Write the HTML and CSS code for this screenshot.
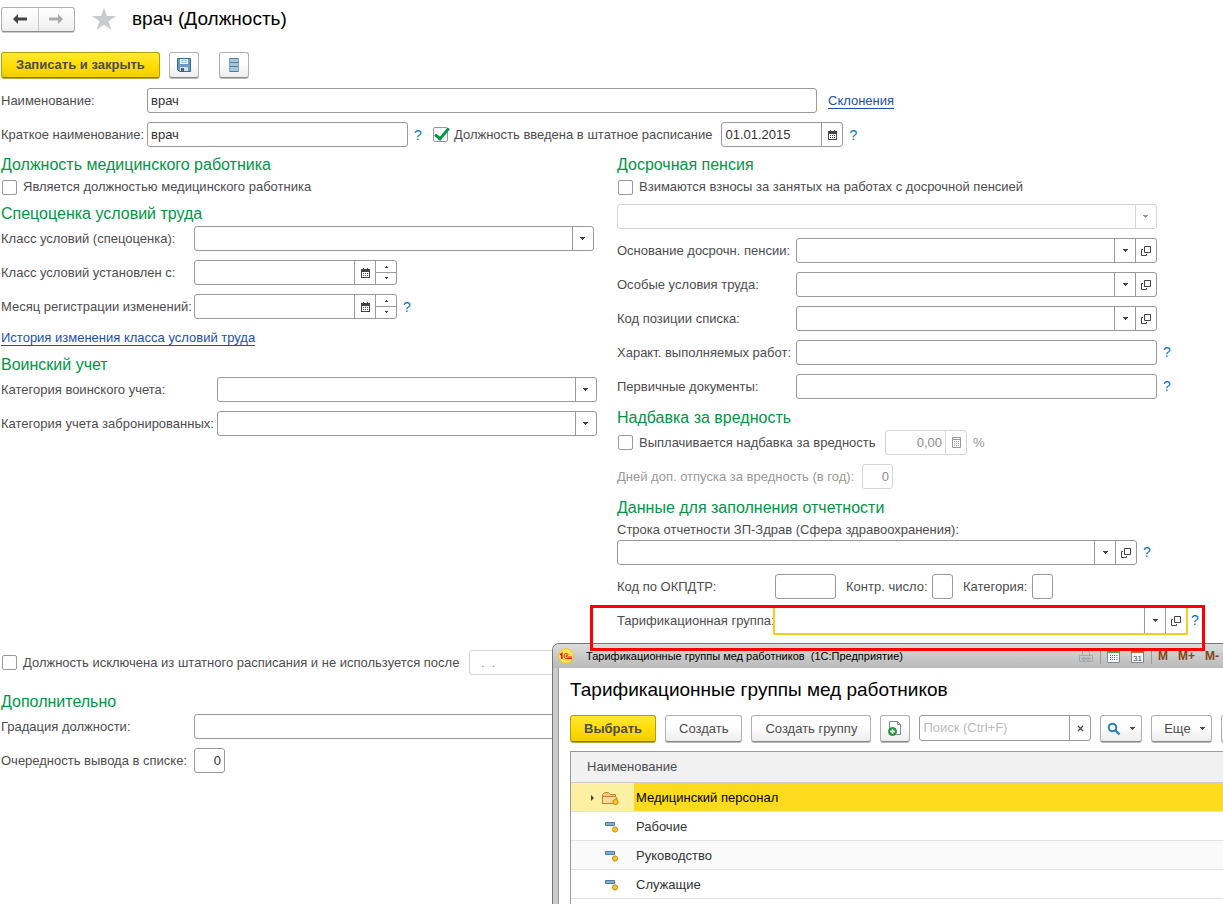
FILE: index.html
```html
<!DOCTYPE html>
<html lang="ru">
<head>
<meta charset="utf-8">
<title>врач (Должность)</title>
<link rel="stylesheet" href="styles.css">
</head>
<body>
<svg class="sprite" aria-hidden="true">
  <symbol id="i-down" viewBox="0 0 7 4"><path d="M1 0h5v1h-1v1h-1v1h-1v-1h-1v-1h-1z" fill="currentColor"/></symbol>
  <symbol id="i-up" viewBox="0 0 5 3"><path d="M1 3V2h1V1h1v1h1v1z" fill="currentColor"/></symbol>
  <symbol id="i-dn" viewBox="0 0 5 3"><path d="M1 0h3v1h-1v1h-1v-1h-1z" fill="currentColor"/></symbol>
  <symbol id="i-open" viewBox="0 0 10 10"><path d="M3.500 .5h6v6h-6zM2 3.500H.5v6h5V8" fill="none" stroke="currentColor"/></symbol>
  <symbol id="i-cal" viewBox="0 0 9 10"><path d="M0 1h2V0h1v1h3V0h1v1h2v9H0zM1 4v5h7V4z" fill="currentColor" fill-rule="evenodd"/><path d="M2 5h1v1H2zM4 5h1v1H4zM6 5h1v1H6zM2 7h1v1H2zM4 7h1v1H4zM6 7h1v1H6z" fill="currentColor"/></symbol>
  <symbol id="i-calc" viewBox="0 0 9 11"><path d="M.5.5h8v10h-8zM1 2.500h7" fill="none" stroke="currentColor"/><path d="M2 4h1v1H2zM4 4h1v1H4zM6 4h1v1H6zM2 6h1v1H2zM4 6h1v1H4zM6 6h1v1H6zM2 8h1v1H2zM4 8h1v1H4zM6 8h1v1H6z" fill="currentColor"/></symbol>
  <symbol id="i-item" viewBox="0 0 14 12"><path d="M.5 1.500h9v3h-9z" fill="#7fb0d3" stroke="#4f7c9b"/><circle cx="10" cy="8.500" r="2.600" fill="#f6c62c" stroke="#c08f17"/></symbol>
</svg>

<main class="page">
  <header class="head">
    <div class="nav">
      <button type="button" aria-label="Назад"><svg width="14" height="10" viewBox="0 0 14 10"><path d="M0 5 5 0v3.500h9v3H5V10z" fill="#444"/></svg></button>
      <button type="button" aria-label="Вперед"><svg width="14" height="10" viewBox="0 0 14 10"><path d="M14 5 9 0v3.500H0v3h9V10z" fill="#aaa"/></svg></button>
    </div>
    <svg class="star" width="24" height="22" viewBox="0 0 24 22"><path d="M12 0 14.900 8H24l-7.300 5.200L19.400 22 12 16.700 4.600 22l2.700-8.800L0 8h9.100z" fill="#c9cbcd"/></svg>
    <h1>врач (Должность)</h1>
  </header>

  <div class="toolbar">
    <button type="button" class="btn primary">Записать и закрыть</button>
    <button type="button" class="btn icon" aria-label="Записать"><svg width="14" height="14" viewBox="0 0 14 14"><path d="M.5.500h13v13h-11l-2-2z" fill="#6b9bc4" stroke="#3b6a95"/><path d="M3 1h8v5H3z" fill="#fff"/><path d="M4 2.500h6M4 4.500h6" stroke="#9db9d0"/><path d="M3 9h8v4H3z" fill="#d5dde4"/><path d="M4 10h3v3H4z" fill="#4d5f70"/></svg></button>
    <button type="button" class="btn icon gap" aria-label="Список"><svg width="10" height="14" viewBox="0 0 10 14"><path d="M0 0h10v14H0z" fill="#a4c5dc"/><path d="M0 .5h10M0 4.500h10M0 8.500h10M0 13.500h10" stroke="#527e9d"/><path d="M.5 0v14M9.500 0v14" stroke="#7fa5c0"/></svg></button>
  </div>

  <div class="row">
    <label class="w146" for="name">Наименование:</label>
    <input class="box w670" id="name" type="text" value="врач">
    <a class="link after" href="#decl">Склонения</a>
  </div>
  <div class="row short">
    <label class="w146" for="sname">Краткое наименование:</label>
    <input class="box w261" id="sname" type="text" value="врач">
    <button type="button" class="help">?</button>
    <label class="check in-list"><input type="checkbox" checked>Должность введена в штатное расписание</label>
    <span class="box combo w122"><input type="text" value="01.01.2015" aria-label="Дата ввода"><button type="button" aria-label="Календарь"><svg width="9" height="10"><use href="#i-cal"/></svg></button></span>
    <button type="button" class="help">?</button>
  </div>

  <div class="columns">
    <section>
      <h2>Должность медицинского работника</h2>
      <label class="check line"><input type="checkbox">Является должностью медицинского работника</label>
      <h2>Спецоценка условий труда</h2>
      <div class="row">
        <label class="w193" for="cls">Класс условий (спецоценка):</label>
        <span class="box combo grow"><select id="cls"><option></option></select><svg class="mark" width="7" height="4"><use href="#i-down"/></svg></span>
        <span class="tail23"></span>
      </div>
      <div class="row">
        <label class="w193" for="clsd">Класс условий установлен с:</label>
        <span class="box combo w203"><input id="clsd" type="text"><button type="button" aria-label="Календарь"><svg width="9" height="10"><use href="#i-cal"/></svg></button><span class="spin"><button type="button" aria-label="Больше"><svg width="5" height="3"><use href="#i-up"/></svg></button><button type="button" aria-label="Меньше"><svg width="5" height="3"><use href="#i-dn"/></svg></button></span></span>
      </div>
      <div class="row">
        <label class="w193" for="mon">Месяц регистрации изменений:</label>
        <span class="box combo w203"><input id="mon" type="text"><button type="button" aria-label="Календарь"><svg width="9" height="10"><use href="#i-cal"/></svg></button><span class="spin"><button type="button" aria-label="Больше"><svg width="5" height="3"><use href="#i-up"/></svg></button><button type="button" aria-label="Меньше"><svg width="5" height="3"><use href="#i-dn"/></svg></button></span></span>
        <button type="button" class="help">?</button>
      </div>
      <div class="line"><a class="link" href="#history">История изменения класса условий труда</a></div>
      <h2>Воинский учет</h2>
      <div class="row">
        <label class="w216" for="mil">Категория воинского учета:</label>
        <span class="box combo grow"><select id="mil"><option></option></select><svg class="mark" width="7" height="4"><use href="#i-down"/></svg></span>
        <span class="tail20"></span>
      </div>
      <div class="row">
        <label class="w216" for="res">Категория учета забронированных:</label>
        <span class="box combo grow"><select id="res"><option></option></select><svg class="mark" width="7" height="4"><use href="#i-down"/></svg></span>
        <span class="tail20"></span>
      </div>
    </section>

    <section>
      <h2>Досрочная пенсия</h2>
      <label class="check line"><input type="checkbox">Взимаются взносы за занятых на работах с досрочной пенсией</label>
      <div class="row">
        <span class="box combo grow off"><select disabled aria-label="Вид взносов"><option></option></select><svg class="mark" width="7" height="4"><use href="#i-down"/></svg></span>
        <span class="tail66"></span>
      </div>
      <div class="row">
        <label class="w179" for="base">Основание досрочн. пенсии:</label>
        <span class="box combo grow"><input id="base" type="text"><button type="button" aria-label="Выбрать"><svg width="7" height="4"><use href="#i-down"/></svg></button><button type="button" aria-label="Открыть"><svg width="10" height="10"><use href="#i-open"/></svg></button></span>
        <span class="tail66"></span>
      </div>
      <div class="row">
        <label class="w179" for="spec">Особые условия труда:</label>
        <span class="box combo grow"><input id="spec" type="text"><button type="button" aria-label="Выбрать"><svg width="7" height="4"><use href="#i-down"/></svg></button><button type="button" aria-label="Открыть"><svg width="10" height="10"><use href="#i-open"/></svg></button></span>
        <span class="tail66"></span>
      </div>
      <div class="row">
        <label class="w179" for="pos">Код позиции списка:</label>
        <span class="box combo grow"><input id="pos" type="text"><button type="button" aria-label="Выбрать"><svg width="7" height="4"><use href="#i-down"/></svg></button><button type="button" aria-label="Открыть"><svg width="10" height="10"><use href="#i-open"/></svg></button></span>
        <span class="tail66"></span>
      </div>
      <div class="row">
        <label class="w179" for="works">Характ. выполняемых работ:</label>
        <input class="box grow" id="works" type="text">
        <span class="tail66"><button type="button" class="help">?</button></span>
      </div>
      <div class="row">
        <label class="w179" for="docs">Первичные документы:</label>
        <input class="box grow" id="docs" type="text">
        <span class="tail66"><button type="button" class="help">?</button></span>
      </div>
      <h2>Надбавка за вредность</h2>
      <div class="row">
        <label class="check w268"><input type="checkbox">Выплачивается надбавка за вредность</label>
        <span class="box combo off w82"><input class="num" type="text" value="0,00" disabled aria-label="Процент надбавки"><button type="button" disabled aria-label="Калькулятор"><svg width="9" height="11"><use href="#i-calc"/></svg></button></span>
        <span class="pct">%</span>
      </div>
      <div class="row">
        <label class="muted w245" for="days">Дней доп. отпуска за вредность (в год):</label>
        <input class="box off num w31" id="days" type="text" value="0" disabled>
      </div>
      <h2>Данные для заполнения отчетности</h2>
      <label class="over" for="zp">Строка отчетности ЗП-Здрав (Сфера здравоохранения):</label>
      <div class="row">
        <span class="box combo grow"><input id="zp" type="text"><button type="button" aria-label="Выбрать"><svg width="7" height="4"><use href="#i-down"/></svg></button><button type="button" aria-label="Открыть"><svg width="10" height="10"><use href="#i-open"/></svg></button></span>
        <span class="tail86"><button type="button" class="help">?</button></span>
      </div>
      <div class="row">
        <label class="w158" for="okp">Код по ОКПДТР:</label>
        <input class="box w61" id="okp" type="text">
        <label class="mid w96" for="ctl">Контр. число:</label>
        <input class="box w21" id="ctl" type="text">
        <label class="mid w79" for="cat">Категория:</label>
        <input class="box w21" id="cat" type="text">
      </div>
      <div class="row">
        <label class="w158" for="tar">Тарификационная группа:</label>
        <span class="box combo grow active"><input id="tar" type="text"><button type="button" aria-label="Выбрать"><svg width="7" height="4"><use href="#i-down"/></svg></button><button type="button" aria-label="Открыть"><svg width="10" height="10"><use href="#i-open"/></svg></button></span>
        <span class="tail35"><button type="button" class="help">?</button></span>
      </div>
    </section>
  </div>

  <div class="row excl">
    <label class="check w468"><input type="checkbox">Должность исключена из штатного расписания и не используется после</label>
    <input class="box off w122 date" type="text" value=".  ." disabled aria-label="Дата исключения">
  </div>
  <h2>Дополнительно</h2>
  <div class="row">
    <label class="w193" for="grad">Градация должности:</label>
    <input class="box w400" id="grad" type="text">
  </div>
  <div class="row">
    <label class="w193" for="ord">Очередность вывода в списке:</label>
    <input class="box num w31" id="ord" type="text" value="0">
  </div>

  <aside class="window">
    <div class="titlebar">
      <svg width="16" height="16" viewBox="0 0 16 16"><circle cx="8" cy="8" r="7.500" fill="#ffe650" stroke="#e8bf48"/><path d="M2 6.800 3.800 5.500V11" fill="none" stroke="#d9161c" stroke-width="1.500"/><path d="M10.500 6.700C9.600 5.200 6 5.200 6 8c0 1.800 1.200 2.500 2.500 2.500H14M9.800 7.500C9 6.900 7.800 7.200 7.800 8s.6 1 1.300 1H14" fill="none" stroke="#d9161c" stroke-width="1"/></svg>
      <span class="caption">Тарификационные группы мед работников&nbsp; (1С:Предприятие)</span>
      <div class="tools">
        <button type="button" aria-label="Печать"><svg width="16" height="14" viewBox="0 0 16 14"><path d="M4.500 6V1.500h5l2 2V6M1.500 6.500h13v6h-13zM3 9.500h10" fill="none" stroke="#a4a8ac"/><circle cx="6" cy="10" r="1.500" fill="none" stroke="#a4a8ac"/><circle cx="10" cy="10" r="1.500" fill="none" stroke="#a4a8ac"/></svg></button>
        <i class="sep"></i>
        <button type="button" aria-label="Калькулятор"><svg width="14" height="13" viewBox="0 0 14 13"><path d="M.5.500h12v12H.5z" fill="#f4f8f8" stroke="#7b8f93"/><path d="M0 0h13v3H0z" fill="#3fa64a"/><path d="M3.500 5v6M5.500 5v6M7.500 5v6" stroke="#58717a" stroke-dasharray="1 1"/><path d="M10 5v6" stroke="#b66" stroke-dasharray="1 1"/></svg></button>
        <button type="button" aria-label="Календарь"><svg width="14" height="13" viewBox="0 0 14 13"><path d="M.5.500h12v12H.5z" fill="#f8f8f8" stroke="#7b8990"/><path d="M0 0h13v3H0z" fill="#b5673b"/><text x="2" y="11" font-size="8" fill="#345">31</text></svg></button>
        <i class="sep"></i>
        <button type="button" class="mem">M</button>
        <button type="button" class="mem">M+</button>
        <button type="button" class="mem">M-</button>
      </div>
    </div>
    <div class="body">
      <h1>Тарификационные группы мед работников</h1>
      <div class="actions">
        <button type="button" class="btn primary">Выбрать</button>
        <button type="button" class="btn">Создать</button>
        <button type="button" class="btn">Создать группу</button>
        <button type="button" class="btn icon" aria-label="Скопировать"><svg width="14" height="15" viewBox="0 0 14 15"><path d="M1.500.5h8l3 3v10h-11z" fill="#fff" stroke="#7b909f"/><path d="M9.500.5v3h3" fill="none" stroke="#7b909f"/><circle cx="4.500" cy="10.500" r="4" fill="#2fa043" stroke="#1f8434"/><path d="M4.500 8v5M2 10.500h5" stroke="#fff" stroke-width="1.400"/></svg></button>
        <span class="box combo search"><input type="search" placeholder="Поиск (Ctrl+F)" aria-label="Поиск"><button type="button" aria-label="Очистить"><svg width="7" height="7" viewBox="0 0 7 7"><path d="M1 1l5 5M6 1 1 6" stroke="#444" stroke-width="1.200"/></svg></button></span>
        <button type="button" class="btn find" aria-label="Найти"><svg width="14" height="14" viewBox="0 0 14 14"><circle cx="5.500" cy="5.500" r="3.800" fill="none" stroke="#2f7fb5" stroke-width="2"/><path d="M8.500 8.500l4 4" stroke="#2f7fb5" stroke-width="2.400"/></svg><svg width="7" height="4"><use href="#i-down"/></svg></button>
        <button type="button" class="btn more">Еще<svg width="7" height="4"><use href="#i-down"/></svg></button>
        <button type="button" class="btn icon" aria-label="Справка"></button>
      </div>
      <table>
        <thead><tr><th colspan="2">Наименование</th></tr></thead>
        <tbody>
          <tr class="sel"><td><svg width="38" height="16" viewBox="0 0 38 16"><path d="M7 5v6l3-3z" fill="#444"/><path d="M18.500 13.500v-9l2-2h4l2 2h5v9z" fill="#f7c777" stroke="#bf8236"/><path d="M18.500 13.500V6.500h12.500l2 1.500v5.500z" fill="#fbd894" stroke="#bf8236"/><circle cx="31.500" cy="12" r="2.600" fill="#f6c62c" stroke="#c08f17"/></svg></td><td>Медицинский персонал</td></tr>
          <tr><td><svg class="leaf" width="14" height="12"><use href="#i-item"/></svg></td><td>Рабочие</td></tr>
          <tr><td><svg class="leaf" width="14" height="12"><use href="#i-item"/></svg></td><td>Руководство</td></tr>
          <tr><td><svg class="leaf" width="14" height="12"><use href="#i-item"/></svg></td><td>Служащие</td></tr>
          <tr><td></td><td></td></tr>
        </tbody>
      </table>
    </div>
  </aside>
  <div class="marker"></div>
</main>
</body>
</html>
```
FILE: styles.css
```css
* { box-sizing: border-box; }
body { margin: 0; background: #fff; color: #4d4d4d; font: 13px/20px "Liberation Sans", Arial, sans-serif; }
.sprite { position: absolute; width: 0; height: 0; }
svg { display: block; flex: none; }
button, input, select { font: inherit; color: inherit; }
button { padding: 0; border: 0; background: none; }
.page { position: relative; min-height: 100vh; padding: 6px 0 0 1px; overflow: hidden; }

h1 { margin: 0; color: #000; font-size: 19px; font-weight: normal; line-height: 24px; white-space: nowrap; }
h2 { margin: 0 0 2px; color: #009646; font-size: 16px; font-weight: normal; line-height: 20px; white-space: nowrap; }

.head { display: flex; align-items: center; height: 26px; }
.nav { display: flex; width: 74px; height: 25px; border: 1px solid #b0b0b0; border-bottom-color: #8c8c8c; border-radius: 3px; background: linear-gradient(#fff, #efefef); box-shadow: 0 1px 0 #ccc; }
.nav button { flex: 1; display: flex; align-items: center; justify-content: center; }
.nav button + button { border-left: 1px solid #c8c8c8; }
.star { margin: 0 16px 0 17px; }

.toolbar { display: flex; gap: 9px; margin: 20px 0 10px; }
.btn { display: flex; align-items: center; justify-content: center; height: 26px; padding: 0 13px; border: 1px solid #b0b0b0; border-bottom-color: #888; border-radius: 3px; background: linear-gradient(#fff 40%, #ececec); box-shadow: 0 1px 0 #b8b8b8; white-space: nowrap; }
.primary { border-color: #b39d10; border-bottom-color: #8f7d0b; background: linear-gradient(#ffe832, #fedc00 60%, #efcd00); box-shadow: 0 1px 0 #b5a43c; font-weight: bold; }
.toolbar .primary { padding: 0 14px; }
.icon { width: 30px; padding: 0; }
.gap { margin-left: 11px; }

.row { display: flex; align-items: center; margin-bottom: 9px; white-space: nowrap; }
.row > label { flex: none; }
.short { margin-bottom: 8px; }
.line { height: 20px; margin-bottom: 7px; }
.over { display: block; height: 20px; white-space: nowrap; }
.box { height: 25px; padding: 0 3px; border: 1px solid #999; border-radius: 3px; background: #fff; color: #333; }
.combo { display: flex; padding: 0; }
.combo input, .combo select { flex: 1; min-width: 0; padding: 0 3px; border: 0; outline: 0; background: none; appearance: none; }
.combo button, .mark { display: flex; align-items: center; justify-content: center; width: 21px; border-left: 1px solid #999; color: #444; }
.mark { height: 23px; padding: 10px 7px 9px 6px; }
.spin { display: flex; flex-direction: column; }
.spin button { flex: 1; }
.spin button:first-child { border-bottom: 1px solid #999; }
.off { border-color: #d5d5d5; color: #8c8c8c; }
.off button, .off .mark { border-color: #d5d5d5; color: #999; }
.active { border: 2px solid #fbc91f; border-radius: 0; height: 29px; margin: -2px 0 -2px -2px; }
.num { text-align: right; }
.date { padding-left: 11px; white-space: pre; }
.muted, .pct { color: #999; }
.pct { margin-left: 6px; }
.grow { flex: 1; min-width: 0; }
.help { width: 20px; color: #0a74bd; font-size: 14px; text-align: center; }
.link { color: #1d50ac; text-decoration: none; border-bottom: 1px solid #1d50ac; line-height: 14px; }
.after { margin-left: 11px; padding-top: 1px; }
.check { display: flex; align-items: center; white-space: nowrap; }
.check input { appearance: none; flex: none; width: 15px; height: 15px; margin: 0 6px 0 1px; border: 1px solid #999; border-radius: 2px; background: #fff; }
.in-list { margin: 0 9px 0 4px; }
.check input:checked { overflow: visible; position: relative; }
.check input:checked::after { content: ""; position: absolute; left: 4px; top: -3px; width: 5px; height: 12px; border: solid #009646; border-width: 0 3px 3px 0; transform: rotate(40deg); }
.mid { padding-left: 10px; }

.w21 { width: 21px; }
.w31 { width: 31px; }
.w61 { width: 61px; }
.w79 { width: 79px; }
.w82 { width: 82px; }
.w96 { width: 96px; }
.w122 { width: 122px; }
.w146 { width: 146px; }
.w158 { width: 158px; }
.w179 { width: 179px; }
.w193 { width: 193px; }
.w203 { width: 203px; }
.w216 { width: 216px; }
.w245 { width: 245px; }
.w261 { width: 261px; }
.w268 { width: 268px; }
.w400 { width: 400px; }
.w468 { width: 468px; }
.w670 { width: 670px; }
.tail20 { width: 20px; }
.tail23 { width: 23px; }
.tail35 { width: 35px; }
.tail66 { width: 66px; }
.tail86 { width: 86px; }
.tail35 .help { width: 14px; }

.columns { display: grid; grid-template-columns: 616fr 606fr; margin-bottom: 8px; }
.excl { margin-bottom: 17px; }

.window { position: absolute; left: 552px; right: 0; top: 643px; bottom: 0; padding-left: 5px; overflow: hidden; border: solid #777; border-width: 1px 0 0 1px; border-radius: 7px 0 0 0; background: #cbcbcb; }
.titlebar { display: flex; align-items: center; height: 24px; margin-left: -5px; padding-left: 5px; background: linear-gradient(#dcdcdc, #b9b9b9); }
.caption { margin-left: 12px; color: #000; font-size: 11px; white-space: nowrap; }
.tools { display: flex; align-items: center; gap: 10px; margin-left: auto; padding-right: 4px; }
.sep { width: 1px; height: 16px; margin: 0 -4px; background: #999; }
.mem { color: #84441c; font-size: 12px; font-weight: bold; }
.body { height: 100%; padding: 10px 0 0 11px; border-left: 1px solid #999; background: #fff; }
.actions { display: flex; gap: 9px; width: 700px; margin: 13px 0 9px; }
.actions .btn { height: 27px; }
.search { width: 172px; height: 26px; }
.search input::placeholder { color: #bbb; }
.actions .find { width: 42px; gap: 8px; padding: 0; }
.actions .more { width: 61px; gap: 8px; padding: 0 0 0 6px; }
table { width: 100%; border: solid #999; border-width: 1px 0 0 1px; border-collapse: separate; border-spacing: 0; }
th { height: 31px; padding: 0 16px; border-bottom: 1px solid #ccc; background: #f1f1f1; font-weight: normal; text-align: left; }
td { height: 29px; padding: 1px 2px 0; border-bottom: 1px solid #e2e2e2; color: #333; }
td:first-child { width: 63px; padding-left: 13px; }
tbody tr:nth-child(3) { background: #fafafa; }
.sel td { background: #fcdb1f; color: #000; }
.sel td:first-child { background: #fdf0a2; }
.leaf { margin-left: 21px; }
.marker { position: absolute; left: 590px; top: 605px; width: 615px; height: 46px; border: 3px solid #f00; pointer-events: none; }
```
